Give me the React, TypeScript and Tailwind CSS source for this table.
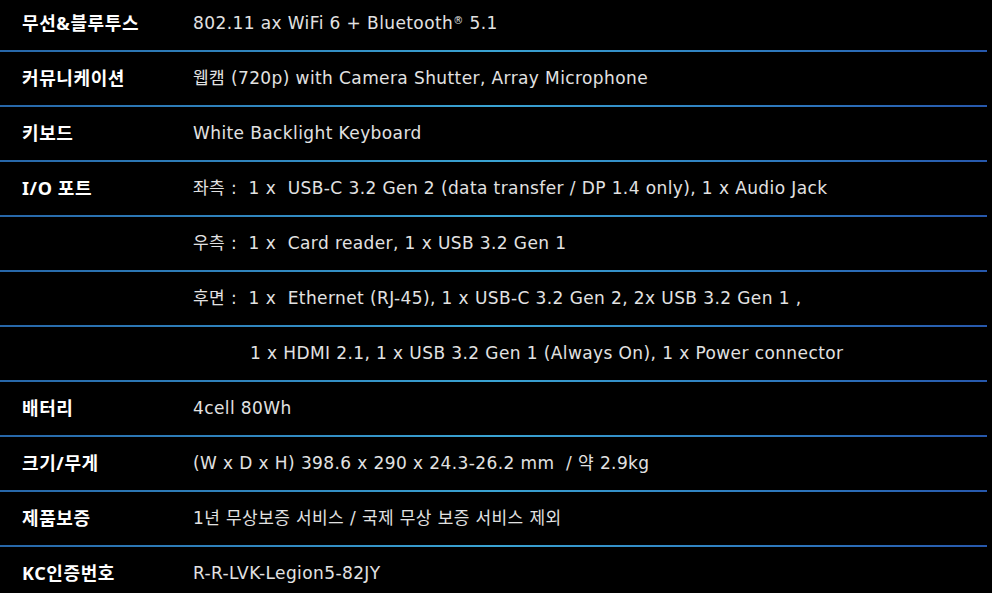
import type { ReactNode } from 'react';

const rows: { label: string; value: ReactNode; indent?: boolean }[] = [
  {
    label: '무선&블루투스',
    value: (
      <>
        802.11 ax WiFi 6 + Bluetooth<sup className="text-[10px]">®</sup> 5.1
      </>
    ),
  },
  { label: '커뮤니케이션', value: '웹캠 (720p) with Camera Shutter, Array Microphone' },
  { label: '키보드', value: 'White Backlight Keyboard' },
  { label: 'I/O 포트', value: '좌측 :  1 x  USB-C 3.2 Gen 2 (data transfer / DP 1.4 only), 1 x Audio Jack' },
  { label: '', value: '우측 :  1 x  Card reader, 1 x USB 3.2 Gen 1' },
  { label: '', value: '후면 :  1 x  Ethernet (RJ-45), 1 x USB-C 3.2 Gen 2, 2x USB 3.2 Gen 1 ,' },
  { label: '', value: '1 x HDMI 2.1, 1 x USB 3.2 Gen 1 (Always On), 1 x Power connector', indent: true },
  { label: '배터리', value: '4cell 80Wh' },
  { label: '크기/무게', value: '(W x D x H) 398.6 x 290 x 24.3-26.2 mm  / 약 2.9kg' },
  { label: '제품보증', value: '1년 무상보증 서비스 / 국제 무상 보증 서비스 제외' },
  { label: 'KC인증번호', value: 'R-R-LVK-Legion5-82JY' },
];

export default function App() {
  return (
    <div className="w-[992px] h-[593px] overflow-hidden bg-black">
      <div className="-mt-[3px] w-[987px]">
        {rows.map((row, i) => (
          <div key={i}>
            {i > 0 && (
              <div className="h-[2px] bg-gradient-to-r from-[#2766a8] via-[#3aa3d2] to-[#2758ac]" />
            )}
            <div className="h-[53px] flex items-center">
              <div
                className="w-[193px] pl-[22px] text-[18px] tracking-[0.6px] font-bold text-white whitespace-pre"
                style={{ fontFamily: '"Noto Sans", "Noto Sans CJK KR", sans-serif' }}
              >
                {row.label}
              </div>
              <div
                className={`text-[17px] tracking-[0.4px] text-[#e2e2e2] whitespace-pre ${row.indent ? 'pl-[57px]' : ''}`}
                style={{ fontFamily: '"DejaVu Sans", "Noto Sans CJK KR", sans-serif' }}
              >
                {row.value}
              </div>
            </div>
          </div>
        ))}
      </div>
    </div>
  );
}
